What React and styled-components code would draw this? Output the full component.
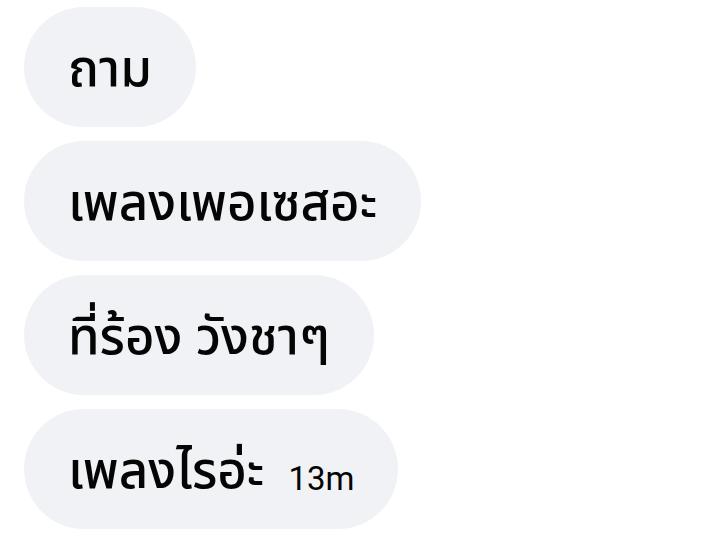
import React from "react";
import styled, { createGlobalStyle } from "styled-components";

const Global = createGlobalStyle`
  html, body { margin: 0; padding: 0; background: #ffffff; }
  body { font-family: "Noto Sans Thai", "Noto Sans", Roboto, sans-serif; }
`;

const Thread = styled.div`
  display: flex;
  flex-direction: column;
  align-items: flex-start;
  gap: 14px;
  padding: 7px 0 0 24px;
  width: 713px;
  height: 541px;
  box-sizing: border-box;
`;

const Bubble = styled.div`
  display: flex;
  align-items: center;
  height: 120px;
  box-sizing: border-box;
  padding: 6px 44px 0;
  border-radius: 60px;
  background: #f0f2f5;
  color: #050505;
  font-size: 51px;
  font-weight: 500;
  line-height: 1;
  white-space: nowrap;
`;

const Time = styled.span`
  font-family: Roboto, "Liberation Sans", sans-serif;
  font-weight: 400;
  font-size: 33px;
  margin-left: 24px;
  padding-top: 12px;
`;

const messages = [
  { text: "ถาม" },
  { text: "เพลงเพอเซสอะ" },
  { text: "ที่ร้อง วังชาๆ" },
  { text: "เพลงไรอ่ะ", time: "13m" },
];

export default function App() {
  return (
    <>
      <Global />
      <Thread>
        {messages.map((m, i) => (
          <Bubble key={i}>
            <span>{m.text}</span>
            {m.time && <Time>{m.time}</Time>}
          </Bubble>
        ))}
      </Thread>
    </>
  );
}
